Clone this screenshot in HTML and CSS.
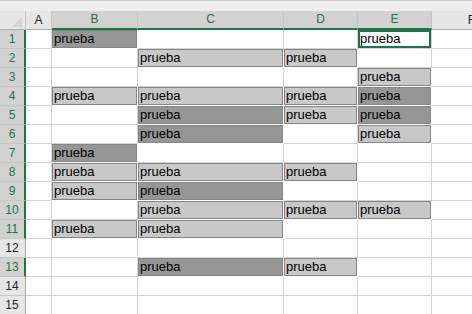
FILE: index.html
```html
<!DOCTYPE html>
<html lang="es">
<head>
    <meta charset="UTF-8">
    <title>Libro1 - Excel</title>
    <link rel="stylesheet" href="styles.css">
</head>
<body>
    <div class="topbar"></div>
    <div class="sheet">
        <!-- column headers -->
        <div class="corner"><svg width="10" height="10" viewBox="0 0 10 10"><polygon points="10,0 10,10 0,10" fill="#d4d4d4"/></svg></div>
        <div class="h">A</div>
        <div class="h hs">B</div>
        <div class="h hs">C</div>
        <div class="h hs">D</div>
        <div class="h hs">E</div>
        <div class="h">F</div>

        <div class="r rs">1</div>
        <div class="c"></div>
        <div class="c dark">prueba</div>
        <div class="c"></div>
        <div class="c"></div>
        <div class="c active">prueba</div>
        <div class="c"></div>

        <div class="r rs">2</div>
        <div class="c"></div>
        <div class="c"></div>
        <div class="c light">prueba</div>
        <div class="c light">prueba</div>
        <div class="c"></div>
        <div class="c"></div>

        <div class="r rs">3</div>
        <div class="c"></div>
        <div class="c"></div>
        <div class="c"></div>
        <div class="c"></div>
        <div class="c light">prueba</div>
        <div class="c"></div>

        <div class="r rs">4</div>
        <div class="c"></div>
        <div class="c light">prueba</div>
        <div class="c light">prueba</div>
        <div class="c light">prueba</div>
        <div class="c dark">prueba</div>
        <div class="c"></div>

        <div class="r rs">5</div>
        <div class="c"></div>
        <div class="c"></div>
        <div class="c dark">prueba</div>
        <div class="c light">prueba</div>
        <div class="c dark">prueba</div>
        <div class="c"></div>

        <div class="r rs">6</div>
        <div class="c"></div>
        <div class="c"></div>
        <div class="c dark">prueba</div>
        <div class="c"></div>
        <div class="c light">prueba</div>
        <div class="c"></div>

        <div class="r rs">7</div>
        <div class="c"></div>
        <div class="c dark">prueba</div>
        <div class="c"></div>
        <div class="c"></div>
        <div class="c"></div>
        <div class="c"></div>

        <div class="r rs">8</div>
        <div class="c"></div>
        <div class="c light">prueba</div>
        <div class="c light">prueba</div>
        <div class="c light">prueba</div>
        <div class="c"></div>
        <div class="c"></div>

        <div class="r rs">9</div>
        <div class="c"></div>
        <div class="c light">prueba</div>
        <div class="c dark">prueba</div>
        <div class="c"></div>
        <div class="c"></div>
        <div class="c"></div>

        <div class="r rs">10</div>
        <div class="c"></div>
        <div class="c"></div>
        <div class="c light">prueba</div>
        <div class="c light">prueba</div>
        <div class="c light">prueba</div>
        <div class="c"></div>

        <div class="r rs">11</div>
        <div class="c"></div>
        <div class="c light">prueba</div>
        <div class="c light">prueba</div>
        <div class="c"></div>
        <div class="c"></div>
        <div class="c"></div>

        <div class="r">12</div>
        <div class="c"></div>
        <div class="c"></div>
        <div class="c"></div>
        <div class="c"></div>
        <div class="c"></div>
        <div class="c"></div>

        <div class="r rs">13</div>
        <div class="c"></div>
        <div class="c"></div>
        <div class="c dark">prueba</div>
        <div class="c light">prueba</div>
        <div class="c"></div>
        <div class="c"></div>

        <div class="r">14</div>
        <div class="c"></div>
        <div class="c"></div>
        <div class="c"></div>
        <div class="c"></div>
        <div class="c"></div>
        <div class="c"></div>

        <div class="r">15</div>
        <div class="c"></div>
        <div class="c"></div>
        <div class="c"></div>
        <div class="c"></div>
        <div class="c"></div>
        <div class="c"></div>
    </div>
</body>
</html>
```

FILE: styles.css
```css
body {
    margin: 0;
    background: #fff;
    font-family: 'Liberation Sans', Arial, sans-serif;
    overflow: hidden;
    width: 472px;
    height: 314px;
}
.topbar {
    height: 10px;
    background: #eeeeee;
    border-top: 1px solid #d0d0d0;
}
.sheet {
    display: grid;
    grid-template-columns: 26px 26px 86px 146px 74px 74px 80px;
    grid-auto-rows: 19px;
    width: 512px;
}
.corner {
    background: #e6e6e6;
    border-right: 1px solid #c6c6c6;
    border-bottom: 1px solid #ababab;
    box-sizing: border-box;
    display: flex;
    justify-content: flex-end;
    align-items: flex-end;
    padding: 0 3px 2px 0;
}
.corner svg {
    display: block;
}
/* column headers */
.h {
    background: #e6e6e6;
    border-right: 1px solid #c6c6c6;
    border-bottom: 1px solid #ababab;
    box-sizing: border-box;
    color: #222;
    font-size: 12px;
    text-align: center;
    line-height: 18px;
}
.h.hs {
    background: #d2d2d2;
    color: #217346;
    border-bottom: 2px solid #217346;
    line-height: 17px;
}
/* row headers */
.r {
    background: #e6e6e6;
    border-right: 1px solid #ababab;
    border-bottom: 1px solid #c6c6c6;
    box-sizing: border-box;
    color: #222;
    font-size: 12px;
    text-align: center;
    line-height: 18px;
    padding-right: 1px;
}
.r.rs {
    background: #d2d2d2;
    color: #217346;
    border-right: 2px solid #217346;
    padding-right: 0;
}
/* cells */
.c {
    border-right: 1px solid #d4d4d4;
    border-bottom: 1px solid #d4d4d4;
    box-sizing: border-box;
    font-size: 13px;
    line-height: 18px;
    padding-left: 2px;
    color: #000;
    white-space: nowrap;
    overflow: hidden;
}
.c.light,
.c.dark {
    border-right-color: #fff;
    border-bottom-color: #fff;
    box-shadow: inset 0 0 0 1px #858585;
}
.c.light {
    background: #c8c8c8;
}
.c.dark {
    background: #969696;
}
.c.active {
    box-shadow: inset 0 0 0 2px #217346;
}
```
